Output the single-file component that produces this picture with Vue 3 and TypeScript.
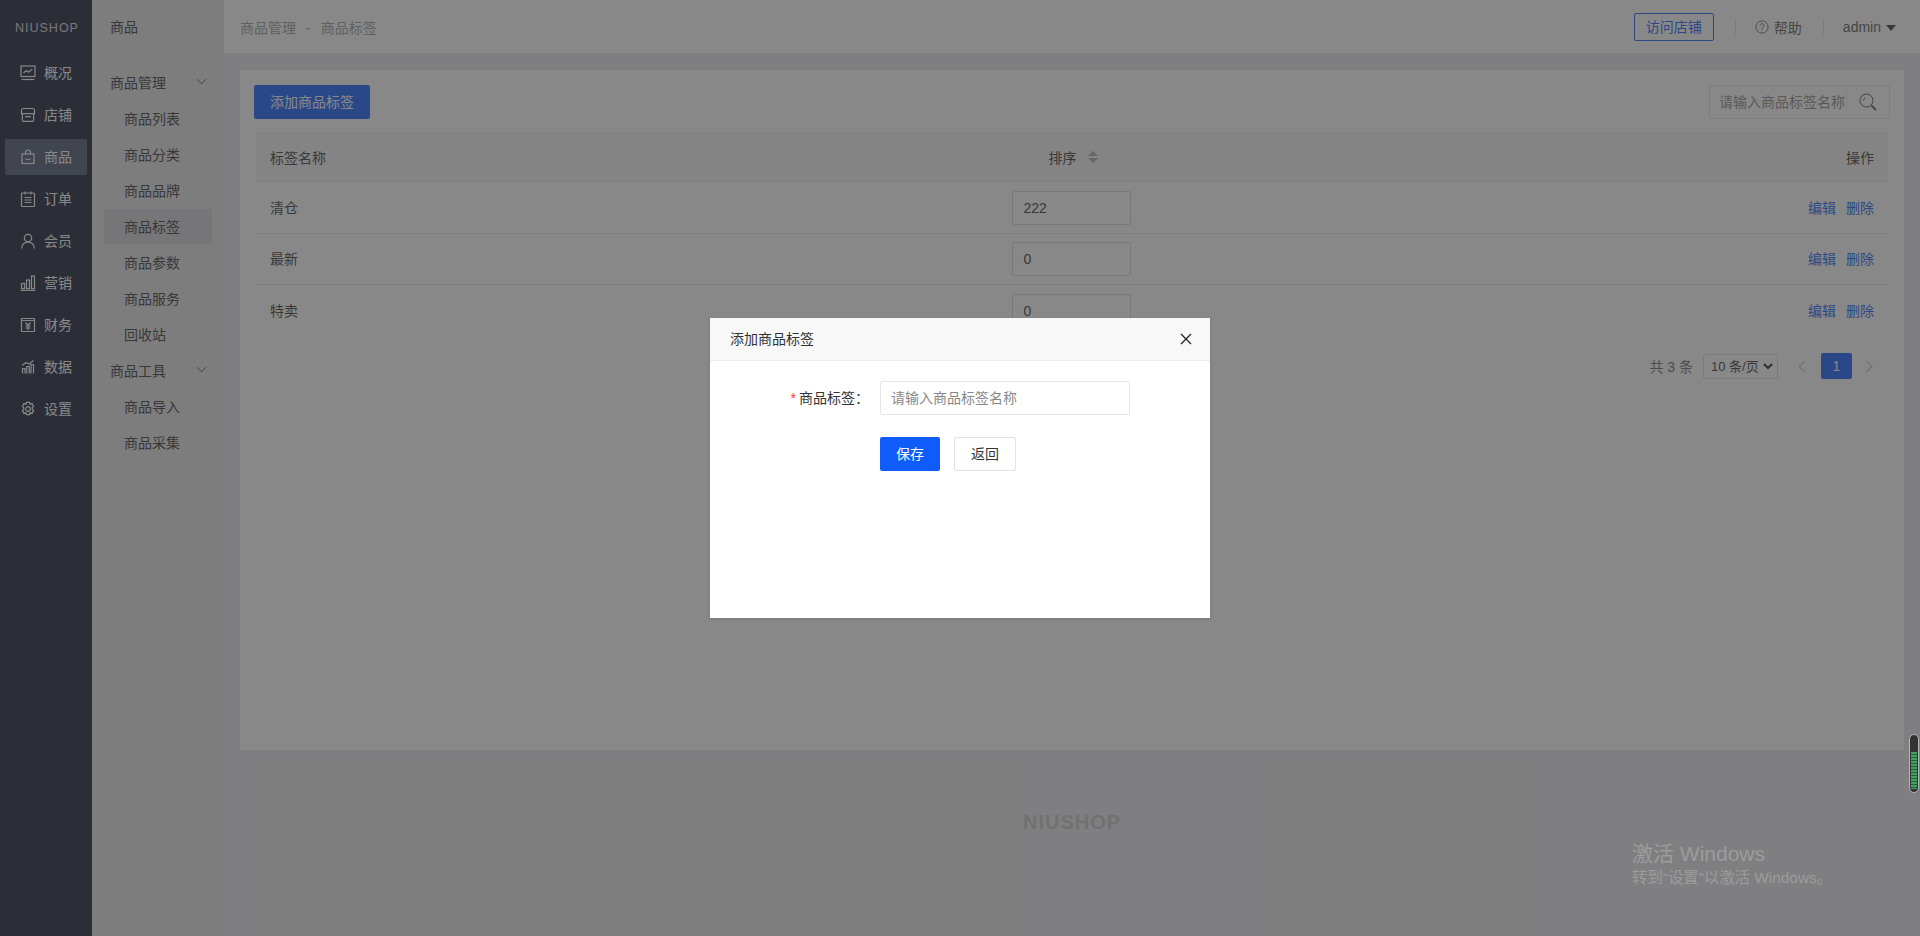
<script setup lang="ts">
interface NavItem {
  label: string
  icon: string
  active?: boolean
}

interface TagRow {
  name: string
  sort: number
}

const navItems: NavItem[] = [
  { label: '概况', icon: 'chart' },
  { label: '店铺', icon: 'store' },
  { label: '商品', icon: 'bag', active: true },
  { label: '订单', icon: 'order' },
  { label: '会员', icon: 'user' },
  { label: '营销', icon: 'bars' },
  { label: '财务', icon: 'money' },
  { label: '数据', icon: 'data' },
  { label: '设置', icon: 'gear' },
]

const manageLinks = ['商品列表', '商品分类', '商品品牌', '商品标签', '商品参数', '商品服务', '回收站']
const toolLinks = ['商品导入', '商品采集']

const rows: TagRow[] = [
  { name: '清仓', sort: 222 },
  { name: '最新', sort: 0 },
  { name: '特卖', sort: 0 },
]
</script>

<template>
  <div class="page">
    <aside class="rail">
      <div class="rail-logo">NIUSHOP</div>
      <nav class="rail-nav">
        <a v-for="item in navItems" :key="item.label" class="rail-item" :class="{ active: item.active }">
          <svg class="rail-icon" viewBox="0 0 16 16" fill="none" stroke="currentColor" stroke-width="1.2">
            <template v-if="item.icon === 'chart'">
              <rect x="1" y="1" width="14" height="10.500" />
              <path d="M3.500 8l2.800-2.400 2.200 1.600 3.600-3" />
              <path d="M1.500 14.500h13" />
            </template>
            <template v-else-if="item.icon === 'store'">
              <path d="M3.500 1.500h9c1.200 0 2 .8 2 2v3.200H1.500V3.500c0-1.200.8-2 2-2z" />
              <path d="M2.300 6.700v6.300c0 .8.500 1.300 1.300 1.300h8.800c.8 0 1.300-.5 1.300-1.300V6.700" />
              <path d="M5 9.700h6" />
            </template>
            <template v-else-if="item.icon === 'bag'">
              <rect x="2" y="5" width="12" height="9.500" />
              <path d="M5.500 5V3.500a2.500 2.500 0 0 1 5 0V5" />
              <path d="M5.500 9.500c1 1.600 4 1.600 5 0" />
            </template>
            <template v-else-if="item.icon === 'order'">
              <rect x="1.500" y="2" width="13" height="13.500" rx="1" />
              <path d="M5 .5v3M11 .5v3" />
              <path d="M4.500 6.500h7M4.500 9h7M4.500 11.500h7" />
            </template>
            <template v-else-if="item.icon === 'user'">
              <circle cx="8" cy="5" r="3.700" />
              <path d="M1.500 15.500c.5-4 3-6.300 6.500-6.300s6 2.300 6.500 6.300" />
            </template>
            <template v-else-if="item.icon === 'bars'">
              <rect x="1.500" y="8.500" width="3" height="5" />
              <rect x="6.500" y="5" width="3" height="8.500" />
              <rect x="11.500" y="1" width="3" height="12.500" />
              <path d="M0.500 15.300h15" />
            </template>
            <template v-else-if="item.icon === 'money'">
              <path d="M1.500 1.500h13v13h-13zM1.500 3.500h13" />
              <path d="M5.500 5.500L8 8.500l2.500-3M8 8.500v4.500M5.500 9h5M5.500 11h5" />
            </template>
            <template v-else-if="item.icon === 'data'">
              <path d="M2.500 14.500V9.500h2.500v5M6.800 14.500V7.500h2.500v7M11 14.500V5.500h2.500v9" />
              <path d="M2 6.500l4-3 3 1.500L13.500 1.500" />
            </template>
            <template v-else>
              <path d="M6.400 1.300h3.200l.5 2 1.900-.7 1.600 2.700-1.400 1.500.1 1.400 1.300 1.400-1.600 2.800-1.900-.7-.5 2H6.400l-.5-2-1.900.7-1.600-2.800 1.400-1.400V7L2.400 5.300 4 2.600l1.900.7z" />
              <circle cx="8" cy="8" r="2.300" />
            </template>
          </svg>
          <span class="rail-text">{{ item.label }}</span>
        </a>
      </nav>
    </aside>

    <aside class="subnav">
      <div class="subnav-title">商品</div>
      <div class="subnav-group">
        <span>商品管理</span>
        <svg class="chevron" viewBox="0 0 12 8" fill="none" stroke="currentColor" stroke-width="1"><path d="M1 1.500l5 5 5-5" /></svg>
      </div>
      <a v-for="link in manageLinks" :key="link" class="subnav-link" :class="{ active: link === '商品标签' }">{{ link }}</a>
      <div class="subnav-group">
        <span>商品工具</span>
        <svg class="chevron" viewBox="0 0 12 8" fill="none" stroke="currentColor" stroke-width="1"><path d="M1 1.500l5 5 5-5" /></svg>
      </div>
      <a v-for="link in toolLinks" :key="link" class="subnav-link">{{ link }}</a>
    </aside>

    <div class="main">
      <header class="topbar">
        <div class="crumbs">
          <span>商品管理</span>
          <span class="crumb-sep">-</span>
          <span>商品标签</span>
        </div>
        <div class="top-actions">
          <a class="visit-btn">访问店铺</a>
          <i class="top-sep"></i>
          <a class="help">
            <svg class="help-icon" viewBox="0 0 16 16" fill="none" stroke="currentColor" stroke-width="1">
              <circle cx="8" cy="8" r="7" />
              <path d="M5.900 6.300a2.100 2.100 0 1 1 3.300 1.700c-.8.600-1.200 1-1.200 2" />
              <path d="M8 11.300v1.100" />
            </svg>
            帮助
          </a>
          <i class="top-sep"></i>
          <a class="account">admin<i class="caret"></i></a>
        </div>
      </header>

      <div class="body">
        <section class="card">
          <div class="toolbar">
            <button class="primary-btn" type="button">添加商品标签</button>
            <div class="search">
              <input class="search-input" type="text" placeholder="请输入商品标签名称" />
              <span class="search-btn">
                <svg viewBox="0 0 18 18" width="18" height="18" fill="none" stroke="currentColor" stroke-width="1">
                  <circle cx="7.500" cy="7.500" r="6.500" />
                  <path d="M4.500 7.500a3 3 0 0 1 1.500-2.600" />
                  <path d="M12.500 12.500l4.500 4.500" stroke-width="2" />
                </svg>
              </span>
            </div>
          </div>

          <div class="table">
            <div class="table-row table-head">
              <span>标签名称</span>
              <span class="cell-center head-sort">
                排序
                <i class="sort-icon"><b class="sort-up"></b><b class="sort-down"></b></i>
              </span>
              <span class="cell-right">操作</span>
            </div>
            <div v-for="row in rows" :key="row.name" class="table-row">
              <span>{{ row.name }}</span>
              <span class="cell-center"><input class="sort-input" type="text" :value="row.sort" /></span>
              <span class="cell-right links"><a>编辑</a><a>删除</a></span>
            </div>
          </div>

          <div class="pager">
            <span class="pager-total">共 3 条</span>
            <select class="pager-size">
              <option>10 条/页</option>
            </select>
            <svg class="pager-arrow" viewBox="0 0 8 14" fill="none" stroke="currentColor" stroke-width="1.300"><path d="M7 1L1 7l6 6" /></svg>
            <span class="pager-num">1</span>
            <svg class="pager-arrow" viewBox="0 0 8 14" fill="none" stroke="currentColor" stroke-width="1.300"><path d="M1 1l6 6-6 6" /></svg>
          </div>
        </section>
        <footer class="foot-logo">NIUSHOP</footer>
      </div>
    </div>

    <div class="shade">
      <div class="dialog">
        <div class="dialog-head">
          <span class="dialog-title">添加商品标签</span>
          <svg class="dialog-close" viewBox="0 0 12 12" fill="none" stroke="currentColor" stroke-width="1.300"><path d="M1 1l10 10M11 1L1 11" /></svg>
        </div>
        <form class="dialog-form">
          <div class="field">
            <label class="field-label"><em>*</em>商品标签：</label>
            <input class="field-input" type="text" placeholder="请输入商品标签名称" />
          </div>
          <div class="dialog-btns">
            <button class="save-btn" type="button">保存</button>
            <button class="back-btn" type="button">返回</button>
          </div>
        </form>
      </div>
    </div>

    <div class="meter"><i></i></div>
    <div class="watermark">
      <div class="wm-title">激活 Windows</div>
      <div class="wm-sub">转到“设置”以激活 Windows。</div>
    </div>
  </div>
</template>

<style>
html,
body {
  margin: 0;
  overflow: hidden;
}
</style>

<style scoped>
.page {
  position: relative;
  display: flex;
  width: 1920px;
  height: 936px;
  overflow: hidden;
  background: #e8e8ec;
  color: #333;
  font: 14px "Liberation Sans", "Noto Sans CJK SC", sans-serif;
}

.rail {
  flex: none;
  width: 92px;
  background: #121a2f;
  color: #fff;
}

.rail-logo {
  height: 55px;
  line-height: 57px;
  padding-left: 15px;
  font-size: 12.500px;
  letter-spacing: 1px;
  color: #d6d6d6;
}

.rail-nav {
  display: flex;
  flex-direction: column;
  gap: 6px;
}

.rail-item {
  display: flex;
  align-items: center;
  gap: 8px;
  height: 36px;
  margin: 0 5px;
  padding-left: 15px;
  border-radius: 2px;
}

.rail-item.active {
  background: #4a5672;
}

.rail-icon {
  width: 16px;
  height: 16px;
  flex: none;
}

.rail-text {
  margin-top: -2px;
}

.subnav {
  flex: none;
  width: 132px;
  box-sizing: border-box;
  padding: 0 12px;
  background: #e2e2e4;
}

.subnav-title {
  height: 53px;
  line-height: 55px;
  padding-left: 6px;
  margin-bottom: 12px;
}

.subnav-group,
.subnav-link {
  display: block;
  height: 36px;
  line-height: 36px;
  padding-left: 6px;
}

.subnav-link {
  padding-left: 20px;
  width: 88px;
  height: 35px;
  margin-bottom: 1px;
}

.subnav-link.active {
  background: #d2d2d6;
}

.subnav-group {
  display: flex;
  align-items: center;
  justify-content: space-between;
  padding-right: 5px;
}

.chevron {
  width: 11px;
  height: 7px;
  margin-top: -3px;
}

.main {
  flex: 1;
  min-width: 0;
}

.topbar {
  display: flex;
  align-items: center;
  justify-content: space-between;
  height: 53px;
  padding: 0 24px 0 16px;
  background: #fff;
}

.crumbs {
  color: #999;
}

.crumb-sep {
  margin: 0 10px;
}

.top-actions {
  display: flex;
  align-items: center;
}

.visit-btn {
  width: 78px;
  height: 26px;
  line-height: 26px;
  text-align: center;
  border: 1px solid #105cfb;
  border-radius: 2px;
  color: #105cfb;
}

.top-sep {
  width: 1px;
  height: 16px;
  margin: 0 19px 0 21px;
  background: #e4e4e4;
}

.help {
  display: flex;
  align-items: center;
  gap: 5px;
  color: #555;
}

.help-icon {
  width: 14px;
  height: 14px;
}

.account {
  display: flex;
  align-items: center;
  color: #555;
}

.caret {
  margin: 2px 0 0 5px;
  border: 5.500px solid transparent;
  border-top: 6px solid #333;
  border-bottom: 0;
}

.body {
  padding: 17px 16px 0;
}

.card {
  height: 680px;
  box-sizing: border-box;
  padding: 15px 16px 0;
  background: #fff;
}

.toolbar {
  display: flex;
  justify-content: space-between;
  height: 34px;
  margin: 0 -2px 13px -2px;
}

.primary-btn {
  width: 116px;
  height: 34px;
  padding: 0 0 2px;
  border: 0;
  border-radius: 2px;
  background: #105cfb;
  color: #fff;
  font: inherit;
}

.search {
  display: flex;
  width: 181px;
  height: 34px;
  box-sizing: border-box;
  border: 1px solid #e6e6e6;
  border-radius: 2px;
}

.search-input {
  width: 137px;
  box-sizing: border-box;
  padding: 0 0 0 9px;
  border: 0;
  border-right: 1px solid #f2f2f2;
  outline: 0;
  background: transparent;
  font: inherit;
}

.search-input::placeholder,
.field-input::placeholder {
  color: #888;
  opacity: 1;
}

.search-btn {
  flex: 1;
  display: flex;
  align-items: center;
  justify-content: center;
  color: #555;
}

.table-row {
  display: grid;
  grid-template-columns: 1fr 1fr 1fr;
  align-items: center;
  height: 51px;
  box-sizing: border-box;
  padding: 0 14px;
  border-bottom: 1px solid #e6e6e6;
}

.table-row:last-child {
  border-bottom: 0;
}

.table-row > span:not(.cell-center) {
  padding-bottom: 2px;
}

.table-head {
  background: #f5f5f5;
  border-bottom: 0;
}

.cell-center {
  display: flex;
  align-items: center;
  justify-content: center;
}

.head-sort {
  padding: 0 0 2px 3px;
}

.cell-right {
  text-align: right;
}

.sort-icon {
  display: inline-flex;
  flex-direction: column;
  gap: 2px;
  margin-left: 12px;
}

.sort-up,
.sort-down {
  border: 5px solid transparent;
  border-top: 0;
  border-bottom: 5px solid #aaa;
}

.sort-down {
  border-top: 5px solid #aaa;
  border-bottom: 0;
}

.sort-input {
  width: 119px;
  height: 34px;
  box-sizing: border-box;
  padding: 0 10px;
  border: 1px solid #d8d8d8;
  border-radius: 2px;
  background: #fff;
  color: #333;
  font: inherit;
}

.links a {
  color: #105cfb;
  margin-left: 10px;
}

.pager {
  display: flex;
  align-items: center;
  justify-content: flex-end;
  height: 26px;
  margin: 17px 15px 0 0;
}

.pager-total {
  color: #666;
  margin-right: 10px;
}

.pager-size {
  appearance: none;
  width: 75px;
  height: 25px;
  padding: 0 0 0 7px;
  border: 1px solid #ddd;
  border-radius: 2px;
  background: #fff url("data:image/svg+xml,%3Csvg xmlns='http://www.w3.org/2000/svg' width='10' height='7' viewBox='0 0 10 7'%3E%3Cpath d='M1 1l4 4 4-4' fill='none' stroke='%23222' stroke-width='2'/%3E%3C/svg%3E") no-repeat right 4px center;
  color: #333;
  font: 13px "Liberation Sans", "Noto Sans CJK SC", sans-serif;
}

.pager-arrow {
  width: 8px;
  height: 13px;
  color: #c4c4c4;
}

.pager-size + .pager-arrow {
  margin-left: 20px;
}

.pager-num {
  width: 31px;
  height: 26px;
  margin: 0 13px 0 15px;
  line-height: 26px;
  text-align: center;
  border-radius: 2px;
  background: #105cfb;
  color: #fff;
}

.foot-logo {
  margin-top: 61px;
  text-align: center;
  color: #c4c4c6;
  font-size: 20px;
  font-weight: 700;
  letter-spacing: 1px;
}

/* 弹层 */
.shade {
  position: absolute;
  inset: 0;
  display: flex;
  align-items: center;
  justify-content: center;
  background: rgba(59, 59, 59, 0.607);
}

.dialog {
  width: 500px;
  height: 300px;
  background: #fff;
  box-shadow: 0 1px 3px rgba(0, 0, 0, 0.12);
}

.dialog-head {
  display: flex;
  align-items: center;
  justify-content: space-between;
  height: 42px;
  padding: 0 20px;
  background: #f8f8f8;
  border-bottom: 1px solid #eee;
}

.dialog-title {
  padding-bottom: 2px;
}

.dialog-close {
  width: 12px;
  height: 12px;
  color: #222;
  margin-right: -2px;
}

.dialog-form {
  padding: 20px 0 0;
}

.field {
  display: flex;
  align-items: center;
}

.field-label {
  width: 159px;
  text-align: right;
  margin-right: 11px;
  padding-bottom: 2px;
  white-space: nowrap;
}

.field-label em {
  color: #f33;
  font-style: normal;
  margin-right: 3px;
}

.field-input {
  width: 250px;
  height: 34px;
  box-sizing: border-box;
  padding: 0 10px;
  border: 1px solid #e6e6e6;
  border-radius: 2px;
  font: inherit;
}

.dialog-btns {
  display: flex;
  gap: 14px;
  margin: 22px 0 0 170px;
}

.save-btn,
.back-btn {
  height: 34px;
  padding: 0 0 2px;
  border-radius: 2px;
  font: inherit;
}

.save-btn {
  width: 60px;
  border: 0;
  background: #105cfb;
  color: #fff;
}

.back-btn {
  width: 62px;
  border: 1px solid #e2e2e2;
  background: #fff;
  color: #333;
}

.meter {
  position: absolute;
  left: 1909px;
  top: 734px;
  width: 10px;
  height: 59px;
  padding: 17px 1px 3px;
  box-sizing: border-box;
  border: 1px solid #b5b5b5;
  border-radius: 5px;
  background: #333;
}

.meter i {
  display: block;
  height: 100%;
  background: repeating-linear-gradient(#3fa45f 0 2px, #2b5a3a 2px 3px);
}

.watermark {
  position: absolute;
  left: 1632px;
  top: 840px;
  color: #9c9c9c;
}

.wm-title {
  font-size: 21px;
  line-height: 27px;
}

.wm-sub {
  font-size: 15.400px;
  line-height: 22px;
}
</style>
